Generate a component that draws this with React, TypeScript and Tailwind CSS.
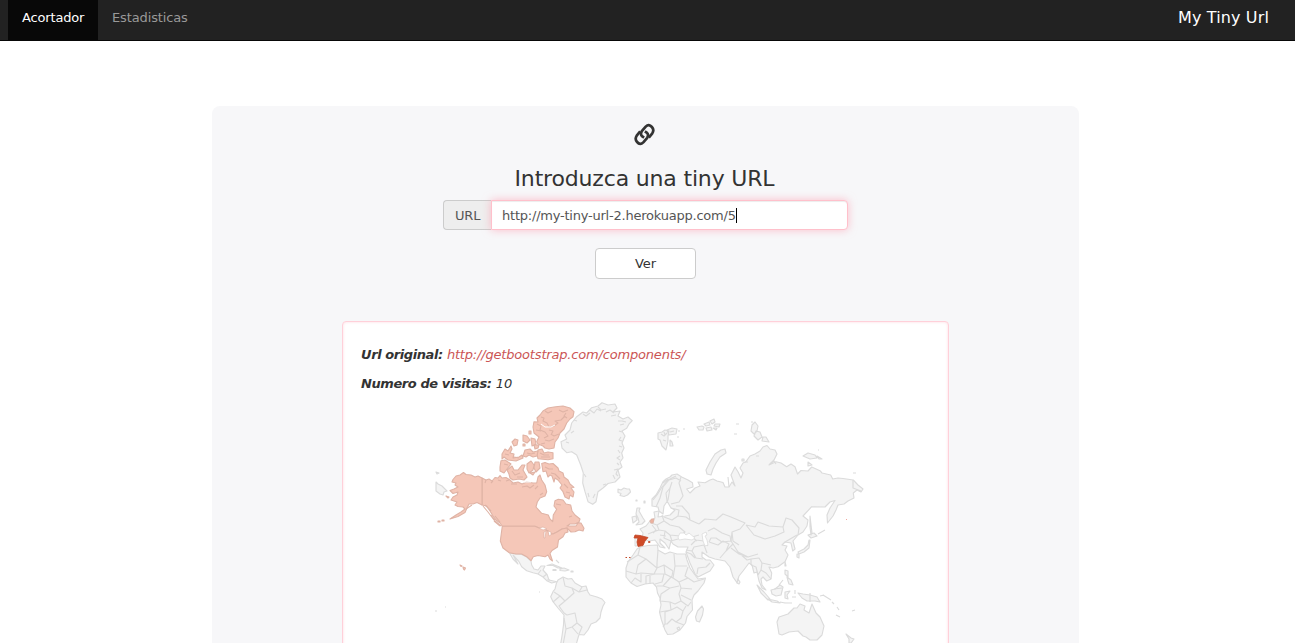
const usa = [
  "M482 478L478 476 475 477 471 475 466 474.5 463.5 472.5 460 475 456 476 453 479.5 452 482 456 483 455 485 458 487 454 489 450 490.5 453 493.5 458 492 457 495 453 497 451 500 457 502 455 505 458 506.5 463 507 465 509 461 512 456 515 450 519 458 516.5 465 512.5 467 508 469 504 473 504 477 502.5 482 505Z",
  "M502.3 526.3H535L539 528 543 528.5 548 531 549 534 553 534 557 532 562 529 567 528 568 532 565 533 563 536.7 558.5 540 557.5 547 552 550.5 550 553.5 552.5 561 550 559 548 555 545 556.7 538 555.5 533.3 556.7 531 560.7 526.7 556.7 521.7 554 516 554 509.3 552.7 503 548 500.3 541 501.5 532Z",
  "M438 521h2v1h-2zM442 520h2v1h-2zM446 496l3 1-1 1zM460 565l2 1-1 .5zM463 567l2.500 1-1 2-1-1z",
];
const canada = [
  "M482 478L486 480 489 479 492 481 495 477.500 498 478 500 475.500 502 478 506 477.500 510 480 513 483 518 482 522 484 526.7 482 533 483 536.7 483 538 477 540 475 541.7 480 545 485 546.7 491.7 545 496 540 498 537.3 502 536 507 541.7 513.3 548.3 515 550 519 552.7 521.7 553.3 515 556.7 509.3 554 506 555 500.7 558.3 499.3 563 500 566 504 570.7 505 572 511 575 515 580 519 579 522 575 524 570 524 567 526 576 526 578 523 581 523 584 528.3 583 531 579 530 575 531.7 571 532 567 528 562 529 557 532 553 534 549 534 548 531 543 528.500 539 528 535 526.3H502.3L500 523 496 520 493 516 490 511 486.7 506 482 505Z",
  "M541.7 463.5L545 462.500 549 464 553 463.5 558 468 559 471 563 473 564 477 568 480 570 484 574 487.3 571 488 574 492 573 497 570 495 569 499 565 497 563 491.7 560 488 562 485 558 480 555 478 554 482 552 476 550 475 548 477 546 471 543 471.7Z",
  "M507 470L512 466 514 470 518 470 522 465 525 465 523 470 527 477 524 480 519 479 513 480 510 478 509 474Z",
  "M501 460.7L505 460 511 464 507 469 504 473 500 471 500 467Z",
  "M527 464l4-3 3 4-1 5-4 3-2-4zM535 462l4 0 1 6-4 4-2-4zM530 473l5-1-2 3z",
  "M540 415L543 411 548 408 554 407 558 406.500 563 406 570 408 574 411.7 573 416.7 570 419 566.7 423 564 429 560 433 558 438 555 442 554 448 549 449 545 448 543 446 538 444 536.7 441.7 539 437 534 433 533 427 534 421.7 538 422 537 418Z",
  "M538 450l4-1 2 4 4-1 5 .7v6l-5 1-10-1-1-4z",
  "M502 454l3-5 3 2 3-5 1 3-2 4 4 1-1 4 6-1 3-2 1 3-7 3-8-1-4-3-2 2zM512 442l3-3 3 1-1 5-3 1zM523 435l4 1 3 4-3 3-4-2zM531 438l4 1 1 5-4 2zM525 450l5-1 3 3 5-1-1 5-4 1-4-2-3 2-3-1zM529 431h2v3h-2zM523 444h2v2h-2zM534 445h5l-1 3-3 1z",
];
// Fjords, inlets and island chains along the Arctic and Pacific coasts
const inlets = "M541 417l3 1-1 3 4 2 2 4 5-1 4-3-3-2 6-1 4-4M537 424l4 2-1 4 5 2 3 4-4 2M545 411l3 2 4-2M559 410l4 2 5-2M536 430l5 1M551 434l3 2 5-2M545 440l4 1 5-2M541 444l4-1M566 413l-2 3 3 2M549 430l4 1-2 4M540 453l4 2 5 0M541 457l9 0M505 454l4 1M514 457l5 1M527 453l4 1 4-1M504 464l4 1M512 471l3 4 5-2M517 477l6 0M545 467l4 2 4 0M551 473l4 1 5 5M564 484l4 4M566 492l4 1M491 483l2-2M506 481l3-1M522 487l5-1 3 2 4-3M535 489l3-3M483 506l5 6 6 8 7 6M485 505l6 6M491 515l4 5M494 521l6 5M495 516l5 6M466 509l6-4M556 504l5 1M572 516l-3 1M543 493l-3 2M486 480l-1 3M498 480l3 1M511 484h6";
const land = [
  // Greenland and Iceland
  "M561 441.7L566.7 439 565 435 570 430 571.7 423 576.7 416.7 583 412 586.7 413 591.7 407.7 598 406 602 402.7 608 405 615 404 617 408 613 412 620 411 618 416 623 419 628 417 632.3 420.7 629 424 626.7 428.3 622 431 625 436 622 443 624 448 621.7 453 623 458 620 462 622 467 618 470 620 477 615 482 608 483.500 603 488 598 491.7 596 501.7 592.7 504.3 588 501.7 585 491.7 582.7 483 583.3 473 580.7 465 576.7 455 571.7 451.7 566.7 452.7 562 448Z",
  "M618 489l3 1 3-2 3 1 2.500 0 1 3-3 3-3.500 1.500-4-1 1-2-3-1z",
  // Mexico, Central America and Caribbean
  "M509.500 553L516 554 521.7 554.500 526.7 557 531 561 531.7 565 534 569 538 570 541 566 545 566 543 570 547 574.500 549 580 556.7 581.7 551.7 583 546.7 580.7 543 577 538 574 533 572.7 526.7 570.7 521.7 566.7 519 561.7 513 555 518 564 513 559Z",
  "M547 565.500l5-1.500 5 2 5 2-4 0-5-2.500zM560 569l4-1 5 2-4 1-5-.5zM553 569.500h3v1h-3zM556 560l3 3M571 571h2v1h-2z",
  // South America
  "M556.500 583L558 580 563 577 568 579 571.7 578.500 575 583 581.7 586.7 586 586 588 592 590 595 597 597 602 599 605 602.500 603 606 601 612 600 618 596 622 591 624 588 630 584 635 579 634.500 578 638 576 645H560.500L562 636 563.500 625 564 615 558 608 553 601.7 550.7 596.7 553 591.7 555 589Z",
  // Eurasia
  "M652 499L656 495 660 488 663 481.7 666 479 670 477 672 475 677 474 681.7 477 688 480 692.500 482.7 693 487 686.7 489 690 493 695 488 700 486 698 482 705 482.7 710 480 713 479 717 481 723 482.500 725 487 729 487 732 482 735 486 731 475 735 467 738 471.7 741 478 743 473 740 468 743 463 746 461.7 750 456 755 454 760 451 763 447 767 445.500 770 449 775 450 777 454 774 460 769 465 776 461.7 781 463 786.7 466.7 791 464 795 466.7 797.5 474 801 470.500 808 471 811.7 467 820 470.7 822 473 830.7 475 832.7 479 838 478 843 478.500 853.3 480 858 485 863 489 861 492 857 490 853.3 493 854 498 848 501 844 504 838 505 836 510 833 516 827.500 523 827 515 830 508 835 500.500 830 502 825 507 811.7 506.7 803 516 808 520 807 526 803 532 798 535 793 541 795 549 792.7 551 791 543 785 542 782 545 787 546 785 550 788 555 785 561.7 778 566.7 773 568 769 567 771.7 573 771 579 766.7 581 763 577 761 579 762 585 766 590 762 588 759 581 757 572 754 573 752 565 749 563 743 571 739 576 737 582.7 733 577 730 567 725 561 715 559 709 557 702 552 702 557 706 560 710 560 714 565 710 571 698 577 695 574 690 563 686 552 688 547 678 547 673 544 671 541 669 549 665 543 660 539 660 543 665 548 660 547 655 540 649 541 642 539 643 533 640 529 646 526 650 521 655 518 654 512 659 511 658 517 665 516 670 515 675 510 671 508 667 501 666 493 670 488 668 500 664 506 663 514 659 511 658 507 652 506Z",
  // British Isles
  "M637 508l3 0-1 3 4 7 2 3-3 3-6 1 3-3-1-4-2-4zM632 517l4-1 1 4-4 3zM636 500h1v1h-1zM644 501h1v2h-1z",
  // Africa
  "M640 547L648 545.500 657.500 545 658 550 665 554 670 552 677 554 685.500 554 687 560 690 568 695 575 698 579 705.500 578 704 583 698 591 694 595 692 600 692.500 610 687 616.500 685.500 623 680 630 673 634 667.500 634.500 665 630 661.500 620 659.500 612 661 605 660 598 657.500 593 656.500 587 653 583 645 584 637 586.500 631 583 626 577 626 568 628 562 633 555 637 549Z",
  "M702 606l1.500 3-1 6-3 7-3-1-1-4 2-6z",
  // Svalbard and Arctic islands
  "M658 433l4-1 3-2 4 1-1 5 0 5-2 9-4-4-2-6-2-1zM667 430l5-2 5 1-1 5-7 1zM670 440l2 2 1 4-3 0zM678 431h2M683 429h2M677 437h2",
  "M697 427l5-1 2 1-1 3-4 0zM704 424l5-2 1 3-4 1zM710 421l4-2 1 3-3 2zM715 424l5 0-1 3-5-1zM706 428l5-1 1 3-5 1zM713 428l4 0-1 2zM736 424h3M734 434h3",
  "M725 449l1 4-6 4-4 6-3 6-2 6-4-1-1-4 4-8 5-8 6-4z",
  "M752 425l3-3 3 4-1 5-3 3-3-3zM756 431l4 1 2 5-4 3-4-4zM763 437l3 0 3 5-7-1zM751 422h2",
  "M803 456l5-3 7 2 2 3-7 1zM817 456l5 3-3 0zM808 462l4 3-4 1zM818 450h1M853 473h3M742 459h2v2h-2z",
  "M436 482l2 2 4 2 5 5-3 1-1 3-3-1-4-3zM436 472l3 1-2 1z",
  // Sakhalin, Japan, Taiwan and Philippines
  "M810 516l1 9 1 8-1 2-1-8zM808 535l6-2 3 3-6 2zM810 540l-1 8-5 4-5 2-1-2 6-3 4-4 1-5zM797 554l2 0 0 4-2-1zM818 534l7-4M785 562l1 4-1 0z",
  "M785 570l3 1 0 6-3-3zM787 577l4 3 2 5-4-1-1-3zM783 580l-4 5M738 579l2 3-1 2-2-1z",
  // Indonesia and Melanesia
  "M757 585l7 7 6 7-2 1-7-7zM768 599l9 2 3 2-8-1zM780 602l5 1 7 0M771 590l4-1 5-4 3 2-2 8-5 1-4-2zM785 592l5-1-3 4 1 4-3-1zM798 593l5 1 7 1 7 2 3 5-5-1-8 0-5-3zM795 590v4M792 597h4M820 596l4-1M823 595l8 5M832 602l2 2M837 607l2 3M836 615l4 2",
  // Australia and New Zealand
  "M777 622L779 617 788 614 794 608 797 608 800 604 805 606 804 610 809 613 812 604 816 613 820 617 824 626 822 635 817 640 810 640 806 637 803 636 798 631 789 632 782 635 779 634Z",
  "M846 634l5 4 3 1-3 4-2 0 0-4zM852 611l3-1M435 611h2M445 607h1M539 592h1",
];
const fjords = "M583 414l3 2 4-3M590 410l4 3 3-4 4 2M598 407l3 3 5-1M606 412l4-2 4 3M611 416l5-1M618 421l4 0 4 1M620 425l4-1M619 431l3 1M621 437l-2 3 3 1M619 446l3 1M618 450l2 3M620 456l-3 2 3 2M617 463l2 2M614 470l4-1-2 5 2 2M613 475l2 4M603 485l3-1M595 494l-2 4M589 497l-1-4M584 474l2 3M571 433l3-2M566 442l3 1M574 420l3 1M661 434l3 2 3-3M663 440l3 1M664 432l1 3M670 432l4-1M657 495l5-8 6-7 8-4M663 483l5-4M653 500l4-5M729 487l-1-10M745 462l3 0M756 456l3 0M770 464l4-3 2 3";
const borders = [
  // South America
  "M563 577L565 586 572 588 574 593 565 601 560 596 554 592M572 588L579 592 582 587M579 592L583 591 587 590M560 596L553 602M565 601L559 606 564 613 567 615 575 613 577 623 572 627 566 629 564 618M577 623L582 627 579 634M572 627L578 634M566 629L563 645",
  // Central America
  "M538 574L541 570M543 577L547 574M547 580L550 580",
  // West and north Africa
  "M640 547L638 555 627 562M638 555L646 559 638 565 636 574 626 571M646 559L657 568 654 574 641 573 636 574M658 550L657 563 657 568 664 565 673 571M674 554L675 566 687 566M675 566L673 578 665 574 664 565M631 583L635 578 641 582 641 574M646 584L646 576 655 574 664 574 662 582 655 584M650 584V576",
  // Central, east and southern Africa
  "M673 571L672 576 663 586 657 586M673 578L679 582 688 578 694 582 704 579M679 582L681 588 692 589M688 567L685 576 688 578M663 586L670 588 679 586M670 588L661 594 660 601 670 602 671 610 660 612M681 588L679 594 681 601 675 604 670 602M681 595L691 600M681 601L688 606 691 602M671 610L665 612 665 624 663 627M671 610L677 607 683 611 681 618 676 622 672 619 667 624 665 624M683 611L686 606M676 622L684 625M677 628l2-1 1 2-2 1Z",
  // Middle East
  "M686 550L692 551 694 547 704 545 707 553M692 551L696 558 703 559M686 552L691 554 695 558M697 574L698 568 706 567 710 563M691 545L696 540 704 541 708 546M699 535L692 537 697 541",
  // Central and south Asia
  "M709 542L718 545 723 541 729 544 726 551 720 558M708 531L714 528 722 533 730 536 731 541 722 542 716 538 711 538 709 542M726 551L733 544 731 541M733 544L738 552 747 560 751 559 751 565M738 552L748 557 758 554M731 548L739 554 747 557M751 559L759 558 762 563 771 565",
  // Central and east Asia
  "M699 524L705 519 716 520 723 514 731 517 745 523 740 529 732 532 731 541M732 532L733 541 739 545M746 525L755 527 758 522 769 526 783 527 784 532 775 536 765 539 754 535 746 525M783 527L786 518 792 520 799 528 798 535M785 542L797 535M751 565L756 567 758 575M762 563L761 570 766 573 771 579M761 570L758 575",
  // Northern and eastern Europe
  "M656 507L660 498 663 487 669 480 676 478 681 481M670 488L672 482M681 477L679 483 683 496 679 502 671 504M676 506L682 506 689 514 690 520 699 524M671 508L679 510 678 516 672 520 664 517M678 516L686 517 690 520M670 525L679 527 685 532 680 536 670 535 665 531 659 530 657 525 664 521 670 525M664 521L662 515M657 525L651 523M659 530L653 532 648 534M652 525L656 530 653 533M665 531L664 538 671 541 678 539M670 535L672 541M660 535L666 536",
  "M810 593V602M774 589L782 588M853 480V488L861 491",
];
const spain = "M635 535L640 535.500 648 537.500 645 541 643 545.500 638 546.500 637 542 638 538 634 538ZM648 542l2-.5v1z";

function WorldMap() {
  return (
    <svg className="block shrink-0" width="430" height="268" viewBox="435 401 430 268" aria-label="Visitas por pais" strokeLinejoin="round">
      <g fill="#f4f4f4" stroke="#dbdbdb" strokeWidth="1.15">
        {land.map((d) => <path key={d} d={d} />)}
        <g fill="none">
          {borders.map((d) => <path key={d} d={d} />)}
          <path d={fjords} />
        </g>
      </g>
      <g fill="#fff" stroke="#dcdcdc" strokeWidth=".8">
        <path d="M678 537l2-4 4 0 2 2 3-2 6 5-3 2-7-1-6 1z" />
        <path d="M702 534l4-2 1 3-2 1 2 4 1 5-3 1-2-5z" />
      </g>
      <g fill="#f5c7b8" stroke="#dfb3a5" strokeWidth="1.1">
        {canada.map((d) => <path key={d} d={d} />)}
        {usa.map((d) => <path key={d} d={d} />)}
        <path d={inlets} fill="none" />
        <path d="M650 521l2-2 2 0-1 4-2 0z" fill="#f0b09c" />
      </g>
      <path d="M539 528l4-1 4 2-4 1zM544 532l2-1-1 7-1 0zM548 531l3 1 0 3-2 1z" fill="#fff" stroke="#dfb3a5" strokeWidth=".7" />
      <path d="M541 424l4 3 6 0 4-2M524 482l7 0" fill="none" stroke="#fff" strokeWidth="1" />
      <path d="M635 538h3l-1 8h-2z" fill="#f4f4f4" stroke="#dcdcdc" />
      <path d={spain} fill="#cf4b28" stroke="#c24827" strokeWidth=".8" />
      <path d="M625.5 557.500h1.500M629 557.500h1.500" stroke="#c24827" strokeWidth="1.2" />
      <path d="M846 519.500h1" stroke="#f0a8a0" />
    </svg>
  );
}

function LinkIcon() {
  return (
    <svg className="mr-[2px] block" width="21" height="23" viewBox="-.5 0 21 23" fill="none" stroke="#333" strokeWidth="2.7" strokeLinejoin="round">
      <path d="M14.300 14.600L17.800 10.300Q20 7 17.400 4Q14.400 .5 11.200 3.600L7.300 8.200Q5.400 11.200 7.800 13.400L9.600 14.600" />
      <path d="M5.700 8.400L2.200 12.700Q0 16 2.600 19Q5.600 22.500 8.800 19.400L12.700 14.800Q14.600 11.800 12.200 9.600L10.400 8.400" />
    </svg>
  );
}

export default function App() {
  return (
    <div className="h-[643px] overflow-hidden bg-white font-['DejaVu_Sans',sans-serif] text-[13px] leading-5 text-[#333]">
      <nav className="flex h-[41px] items-stretch justify-between border-b border-[#080808] bg-[#222] pl-2 pr-[26px]">
        <div className="flex">
          <a className="w-[90px] bg-[#080808] pl-[14px] pt-2 tracking-[-0.16px] text-white">Acortador</a>
          <a className="px-[14px] pt-2 tracking-[-0.13px] text-[#999]">Estadisticas</a>
        </div>
        <span className="pt-2 text-base leading-5 tracking-[0.14px] text-white">My Tiny Url</span>
      </nav>
      <main className="ml-[212px] mt-[65px] flex h-[700px] w-[867px] flex-col items-center rounded-lg bg-[#f7f7f9] pt-[17px]">
        <LinkIcon />
        <h1 className="mr-[2px] mt-[18px] text-[22px] leading-[30px] tracking-[-0.17px]">Introduzca una tiny URL</h1>
        <div className="mt-[6px] flex h-[30px] w-[405px]">
          <span className="w-[48px] rounded-l border border-r-0 border-[#ccc] bg-[#eee] pl-[11px] pt-[5px] tracking-[-0.2px] text-[#555]">URL</span>
          <div className="flex flex-1 items-start rounded-r border border-[#ffc0cb] bg-white pl-[10px] pt-[5px] tracking-[-0.22px] text-[#555] shadow-[inset_0_1px_1px_rgba(0,0,0,0.075),0_0_8px_rgba(255,150,170,0.6)]">
            http://my-tiny-url-2.herokuapp.com/5<span className="mt-[2px] h-[15px] w-px bg-black" />
          </div>
        </div>
        <button className="mt-[18px] h-[31px] w-[101px] rounded border border-[#ccc] bg-white">Ver</button>
        <section className="mt-[42px] flex h-[420px] w-[607px] flex-col rounded border border-[#ffd0d9] bg-white pl-[18px] pt-[23px] italic shadow-[inset_0_0_3px_rgba(255,192,203,0.6)]">
          <p><b className="tracking-[-0.42px]">Url original:</b> <a className="tracking-[-0.18px] text-[#cb5555]">http://getbootstrap.com/components/</a></p>
          <p className="mt-[9px]"><b className="tracking-[-0.42px]">Numero de visitas:</b> 10</p>
          <div className="ml-[74px] mt-[7px] flex"><WorldMap /></div>
        </section>
      </main>
    </div>
  );
}
